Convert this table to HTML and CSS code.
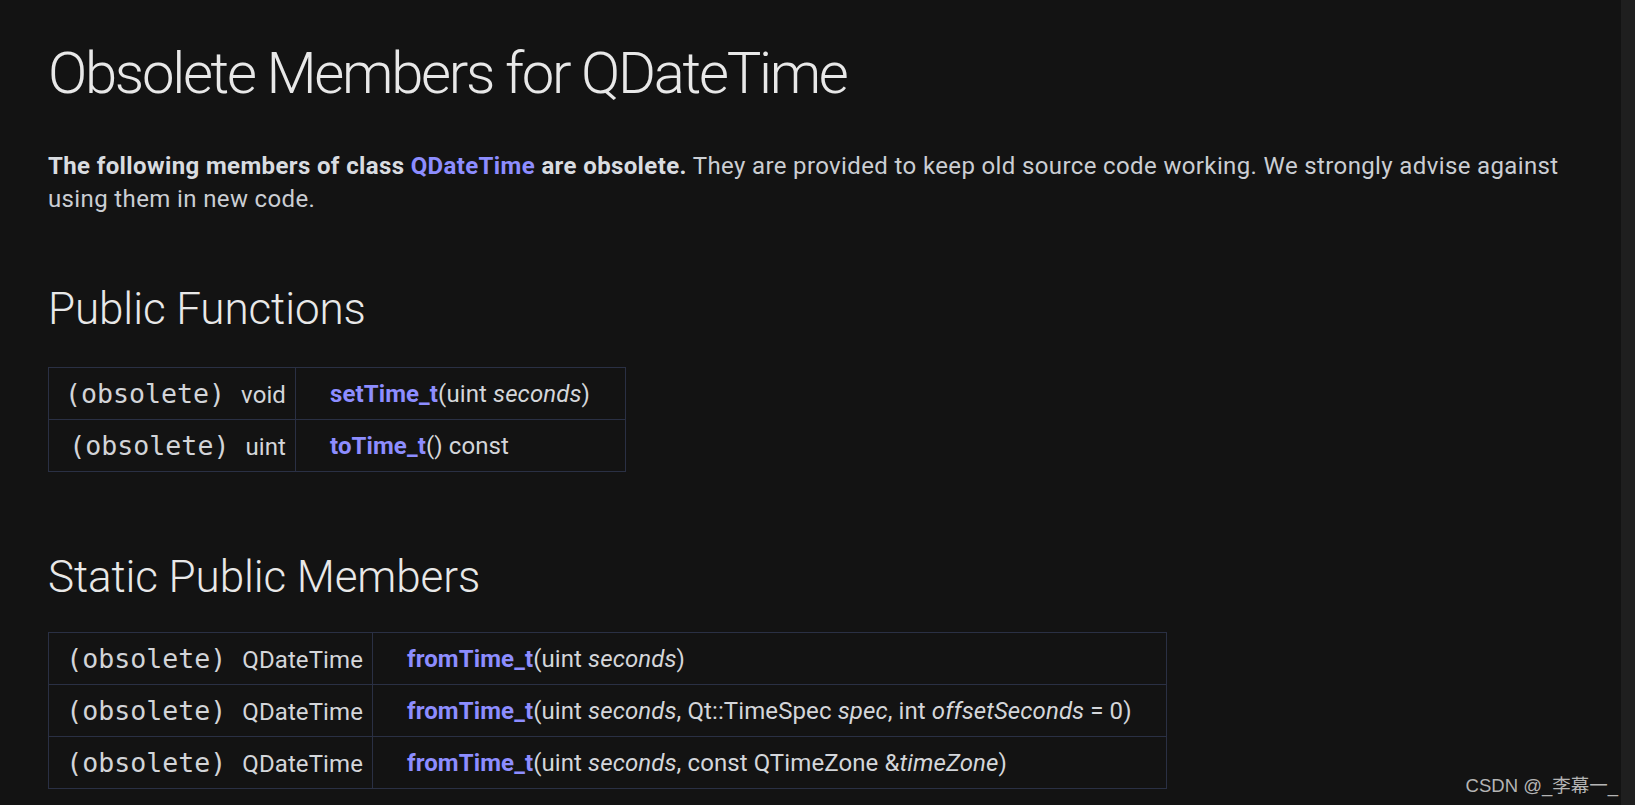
FILE: index.html
```html
<!DOCTYPE html>
<html lang="en">
<head>
<meta charset="utf-8">
<title>Obsolete Members for QDateTime</title>
<link rel="stylesheet" href="styles.css">
</head>
<body>
<div class="window">
  <main class="content">
    <h1 class="title">Obsolete Members for QDateTime</h1>
    <p class="intro"><b>The following members of class</b> <a class="link" href="#">QDateTime</a> <b>are obsolete.</b> They are provided to keep old source code working. We strongly advise against using them in new code.</p>

    <h2 class="section">Public Functions</h2>
    <table class="members members-pf">
      <colgroup><col class="col-left"><col></colgroup>
      <tr>
        <td class="item-left"><code class="mono">(obsolete) </code>void</td>
        <td class="item-right"><a class="fn" href="#">setTime_t</a>(uint <i>seconds</i>)</td>
      </tr>
      <tr>
        <td class="item-left"><code class="mono">(obsolete) </code>uint</td>
        <td class="item-right"><a class="fn" href="#">toTime_t</a>() const</td>
      </tr>
    </table>

    <h2 class="section section-2">Static Public Members</h2>
    <table class="members members-spm">
      <colgroup><col class="col-left"><col></colgroup>
      <tr>
        <td class="item-left"><code class="mono">(obsolete) </code>QDateTime</td>
        <td class="item-right"><a class="fn" href="#">fromTime_t</a>(uint <i>seconds</i>)</td>
      </tr>
      <tr>
        <td class="item-left"><code class="mono">(obsolete) </code>QDateTime</td>
        <td class="item-right"><a class="fn" href="#">fromTime_t</a>(uint <i>seconds</i>, Qt::TimeSpec <i>spec</i>, int <i>offsetSeconds</i> = 0)</td>
      </tr>
      <tr>
        <td class="item-left"><code class="mono">(obsolete) </code>QDateTime</td>
        <td class="item-right"><a class="fn" href="#">fromTime_t</a>(uint <i>seconds</i>, const QTimeZone &amp;<i>timeZone</i>)</td>
      </tr>
    </table>
  </main>
  <div class="scrollbar"></div>
  <div class="watermark">CSDN @_李幕一_</div>
</div>
</body>
</html>
```

FILE: styles.css
```css
html, body {
  margin: 0;
  padding: 0;
  height: 100%;
  background: #131313;
}

body {
  font-family: Roboto, "Noto Sans", sans-serif;
  color: #d4d6da;
  overflow: hidden;
}

.window {
  display: flex;
  height: 805px;
  position: relative;
}

.content {
  flex: 1;
  padding: 37px 0 0 48px;
  min-width: 0;
}

.scrollbar {
  width: 14px;
  background: #1f1f1f;
}

.title {
  margin: 0;
  font-weight: 300;
  font-size: 58px;
  line-height: 72px;
  color: #e8e8e8;
  letter-spacing: -2.3px;
}

.intro {
  margin: 41px 0 0 0;
  max-width: 1530px;
  font-size: 24px;
  line-height: 33px;
  color: #cbced3;
  letter-spacing: 0.37px;
}

.intro b {
  font-weight: 700;
  color: #d9dce0;
}

.link {
  color: #8d8dff;
  font-weight: 700;
  text-decoration: none;
}

.section {
  margin: 67px 0 32px 0;
  font-weight: 300;
  font-size: 44px;
  line-height: 52px;
  color: #e8e8e8;
  letter-spacing: -0.1px;
}

.section-2 {
  margin-top: 79px;
  margin-bottom: 29px;
}

.members {
  border-collapse: collapse;
  table-layout: fixed;
  font-size: 24px;
  color: #d4d6da;
  letter-spacing: 0.1px;
}

.members td {
  border: 1px solid #2a3044;
  height: 51px;
  padding: 0;
  white-space: nowrap;
}

.members-pf { width: 578px; }
.members-pf .col-left { width: 247px; }

.members-spm { width: 1119px; }
.members-spm .col-left { width: 324px; }

.item-left {
  text-align: right;
  padding-right: 9px !important;
}

.item-right {
  padding-left: 34px !important;
}

.mono {
  font-family: "DejaVu Sans Mono", monospace;
  font-size: 26.6px;
  letter-spacing: 0;
  color: #d2d4d8;
}

.fn {
  color: #8d8dff;
  font-weight: 700;
  text-decoration: none;
}

.members i {
  font-style: italic;
}

.watermark {
  position: absolute;
  right: 17px;
  bottom: 8px;
  font-family: "Liberation Sans", "Noto Sans CJK SC", sans-serif;
  font-size: 18.5px;
  color: #b5b5b5;
  line-height: 22px;
}
```
